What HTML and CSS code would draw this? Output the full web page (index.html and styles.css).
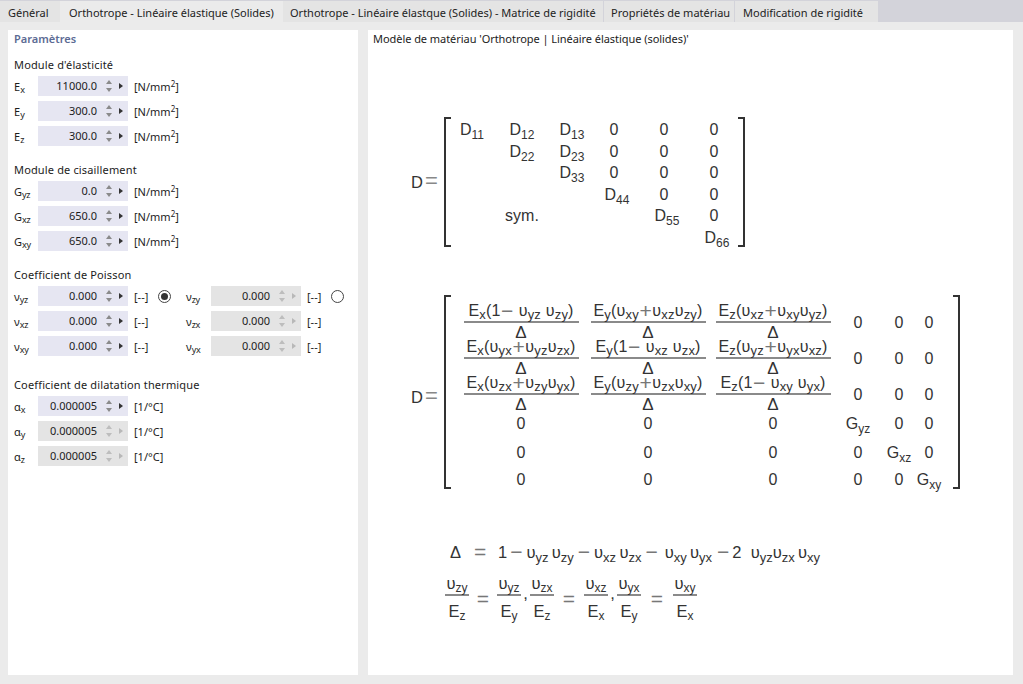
FILE: index.html
```html
<!DOCTYPE html>
<html lang="fr">
<head>
<meta charset="utf-8">
<title>Orthotrope - Linéaire élastique (Solides)</title>
<link rel="stylesheet" href="styles.css">
</head>
<body>
<nav class="tabs">
  <div class="tab t1">Général</div>
  <div class="tab t2 active">Orthotrope - Linéaire élastique (Solides)</div>
  <div class="tab t3">Orthotrope - Linéaire élastque (Solides) - Matrice de rigidité</div>
  <div class="tab t4">Propriétés de matériau</div>
  <div class="tab t5">Modification de rigidité</div>
</nav>
<main class="content">
  <section class="panel left">
    <h2 class="heading">Paramètres</h2>

    <div class="group g1">
      <h3>Module d'élasticité</h3>
      <div class="row"><span class="lab">E<sub>x</sub></span><span class="field"><span class="val">11000.0</span><i class="spin"></i><i class="next"></i></span><span class="unit">[N/mm<sup>2</sup>]</span></div>
      <div class="row"><span class="lab">E<sub>y</sub></span><span class="field"><span class="val">300.0</span><i class="spin"></i><i class="next"></i></span><span class="unit">[N/mm<sup>2</sup>]</span></div>
      <div class="row"><span class="lab">E<sub>z</sub></span><span class="field"><span class="val">300.0</span><i class="spin"></i><i class="next"></i></span><span class="unit">[N/mm<sup>2</sup>]</span></div>
    </div>

    <div class="group">
      <h3>Module de cisaillement</h3>
      <div class="row"><span class="lab">G<sub>yz</sub></span><span class="field"><span class="val">0.0</span><i class="spin"></i><i class="next"></i></span><span class="unit">[N/mm<sup>2</sup>]</span></div>
      <div class="row"><span class="lab">G<sub>xz</sub></span><span class="field"><span class="val">650.0</span><i class="spin"></i><i class="next"></i></span><span class="unit">[N/mm<sup>2</sup>]</span></div>
      <div class="row"><span class="lab">G<sub>xy</sub></span><span class="field"><span class="val">650.0</span><i class="spin"></i><i class="next"></i></span><span class="unit">[N/mm<sup>2</sup>]</span></div>
    </div>

    <div class="group">
      <h3>Coefficient de Poisson</h3>
      <div class="row">
        <span class="lab">ν<sub>yz</sub></span><span class="field"><span class="val">0.000</span><i class="spin"></i><i class="next"></i></span><span class="unit short">[--]</span><span class="radio on"></span>
        <span class="lab second">ν<sub>zy</sub></span><span class="field off"><span class="val">0.000</span><i class="spin"></i><i class="next"></i></span><span class="unit short">[--]</span><span class="radio"></span>
      </div>
      <div class="row">
        <span class="lab">ν<sub>xz</sub></span><span class="field"><span class="val">0.000</span><i class="spin"></i><i class="next"></i></span><span class="unit short">[--]</span><span class="radio none"></span>
        <span class="lab second">ν<sub>zx</sub></span><span class="field off"><span class="val">0.000</span><i class="spin"></i><i class="next"></i></span><span class="unit short">[--]</span>
      </div>
      <div class="row">
        <span class="lab">ν<sub>xy</sub></span><span class="field"><span class="val">0.000</span><i class="spin"></i><i class="next"></i></span><span class="unit short">[--]</span><span class="radio none"></span>
        <span class="lab second">ν<sub>yx</sub></span><span class="field off"><span class="val">0.000</span><i class="spin"></i><i class="next"></i></span><span class="unit short">[--]</span>
      </div>
    </div>

    <div class="group g4">
      <h3>Coefficient de dilatation thermique</h3>
      <div class="row"><span class="lab">α<sub>x</sub></span><span class="field"><span class="val">0.000005</span><i class="spin"></i><i class="next"></i></span><span class="unit">[1/°C]</span></div>
      <div class="row"><span class="lab">α<sub>y</sub></span><span class="field off"><span class="val">0.000005</span><i class="spin"></i><i class="next"></i></span><span class="unit">[1/°C]</span></div>
      <div class="row"><span class="lab">α<sub>z</sub></span><span class="field off"><span class="val">0.000005</span><i class="spin"></i><i class="next"></i></span><span class="unit">[1/°C]</span></div>
    </div>
  </section>

  <section class="panel right">
    <p class="title">Modèle de matériau 'Orthotrope | Linéaire élastique (solides)'</p>

    <div class="eq eq1">
      <div class="lhs">D<span class="op">=</span></div>
      <div class="bracket"></div>
      <div class="m1">
        <span>D<sub>11</sub></span><span>D<sub>12</sub></span><span>D<sub>13</sub></span><span>0</span><span>0</span><span>0</span>
        <span></span><span>D<sub>22</sub></span><span>D<sub>23</sub></span><span>0</span><span>0</span><span>0</span>
        <span></span><span></span><span>D<sub>33</sub></span><span>0</span><span>0</span><span>0</span>
        <span></span><span></span><span></span><span class="shift">D<sub>44</sub></span><span>0</span><span>0</span>
        <span></span><span>sym.</span><span></span><span></span><span class="shift">D<sub>55</sub></span><span>0</span>
        <span></span><span></span><span></span><span></span><span></span><span class="shift">D<sub>66</sub></span>
      </div>
      <div class="bracket close"></div>
    </div>

    <div class="eq eq2">
      <div class="lhs low">D<span class="op">=</span></div>
      <div class="bracket"></div>
      <div class="m2">
        <span><span class="frac"><span class="num">E<sub>x</sub>(1<b>−</b>&nbsp;υ<sub>yz</sub>&nbsp;υ<sub>zy</sub>)</span><span class="den">Δ</span></span></span>
        <span><span class="frac"><span class="num">E<sub>y</sub>(υ<sub>xy</sub><b>+</b>υ<sub>xz</sub>υ<sub>zy</sub>)</span><span class="den">Δ</span></span></span>
        <span><span class="frac"><span class="num">E<sub>z</sub>(υ<sub>xz</sub><b>+</b>υ<sub>xy</sub>υ<sub>yz</sub>)</span><span class="den">Δ</span></span></span>
        <span>0</span><span>0</span><span>0</span>
        <span><span class="frac"><span class="num">E<sub>x</sub>(υ<sub>yx</sub><b>+</b>υ<sub>yz</sub>υ<sub>zx</sub>)</span><span class="den">Δ</span></span></span>
        <span><span class="frac"><span class="num">E<sub>y</sub>(1<b>−</b>&nbsp;υ<sub>xz</sub>&nbsp;υ<sub>zx</sub>)</span><span class="den">Δ</span></span></span>
        <span><span class="frac"><span class="num">E<sub>z</sub>(υ<sub>yz</sub><b>+</b>υ<sub>yx</sub>υ<sub>xz</sub>)</span><span class="den">Δ</span></span></span>
        <span>0</span><span>0</span><span>0</span>
        <span><span class="frac"><span class="num">E<sub>x</sub>(υ<sub>zx</sub><b>+</b>υ<sub>zy</sub>υ<sub>yx</sub>)</span><span class="den">Δ</span></span></span>
        <span><span class="frac"><span class="num">E<sub>y</sub>(υ<sub>zy</sub><b>+</b>υ<sub>zx</sub>υ<sub>xy</sub>)</span><span class="den">Δ</span></span></span>
        <span><span class="frac"><span class="num">E<sub>z</sub>(1<b>−</b>&nbsp;υ<sub>xy</sub>&nbsp;υ<sub>yx</sub>)</span><span class="den">Δ</span></span></span>
        <span>0</span><span>0</span><span>0</span>
        <span>0</span><span>0</span><span>0</span><span><span class="gv">G<sub>yz</sub></span></span><span>0</span><span>0</span>
        <span>0</span><span>0</span><span>0</span><span>0</span><span><span class="gv">G<sub>xz</sub></span></span><span>0</span>
        <span>0</span><span>0</span><span>0</span><span>0</span><span>0</span><span><span class="gv">G<sub>xy</sub></span></span>
      </div>
      <div class="bracket close"></div>
    </div>

    <div class="line1">
      <span class="delta">Δ</span><b class="eqs">=</b><span>1</span><b class="minus first">−</b><span>υ<sub>yz</sub>&thinsp;υ<sub>zy</sub></span><b class="minus">−</b><span>υ<sub>xz</sub>&thinsp;υ<sub>zx</sub></span><b class="minus third">−</b><span>υ<sub>xy</sub>&thinsp;υ<sub>yx</sub></span><b class="minus wide">−</b><span>2&nbsp;&nbsp;υ<sub>yz</sub>υ<sub>zx</sub>&thinsp;υ<sub>xy</sub></span>
    </div>

    <div class="line2">
      <span class="ratio"><span class="top">υ<sub>zy</sub></span><span class="bot">E<sub>z</sub></span></span>
      <b class="rel r1">=</b>
      <span class="ratio"><span class="top">υ<sub>yz</sub></span><span class="bot">E<sub>y</sub></span></span>
      <span class="comma">,</span>
      <span class="ratio"><span class="top">υ<sub>zx</sub></span><span class="bot">E<sub>z</sub></span></span>
      <b class="rel r2">=</b>
      <span class="ratio"><span class="top">υ<sub>xz</sub></span><span class="bot">E<sub>x</sub></span></span>
      <span class="comma">,</span>
      <span class="ratio"><span class="top">υ<sub>yx</sub></span><span class="bot">E<sub>y</sub></span></span>
      <b class="rel r3">=</b>
      <span class="ratio"><span class="top">υ<sub>xy</sub></span><span class="bot">E<sub>x</sub></span></span>
    </div>
  </section>
</main>
</body>
</html>
```
FILE: styles.css
```css
* { box-sizing: border-box; }
html, body { margin: 0; padding: 0; }
body {
  width: 1023px;
  height: 684px;
  overflow: hidden;
  background: #ebebeb;
  font-family: "Noto Sans", "Open Sans", sans-serif;
  font-size: 11px;
  color: #1c1c1c;
}

/* Tabs */
.tabs {
  display: flex;
  height: 22px;
  padding-top: 1px;
  background: #d3d3da;
}
.tab {
  height: 21px;
  line-height: 23px;
  background: #e4e4e4;
  margin-right: 1px;
  padding-left: 8px;
  white-space: nowrap;
  color: #222;
}
.t1 { width: 60px; margin-right: 0; }
.t2 { width: 223px; margin-right: 0; padding-left: 9px; }
.t3 { width: 320px; padding-left: 7px; }
.t4 { width: 130px; padding-left: 7px; }
.t5 { width: 143px; padding-left: 8px; }
.tab.active { background: #ebebeb; }

/* Panels */
.content {
  display: flex;
  gap: 10px;
  padding: 8px 10px 9px 8px;
  height: 662px;
}
.panel { background: #fff; height: 645px; }
.left { width: 350px; padding: 0 6px; }
.right { width: 645px; padding-left: 5px; }

.heading {
  margin: 0;
  height: 18px;
  line-height: 18px;
  font-size: 11px;
  font-weight: 600;
  color: #5c6b94;
}

/* Groups and rows */
.group { margin-bottom: 10px; }
.group.g1 { margin-top: 8px; }
.group.g4 { margin-top: 15px; }
.group h3 {
  margin: 0;
  height: 20px;
  line-height: 18px;
  font-size: 11px;
  font-weight: 400;
  letter-spacing: .15px;
}
.row {
  display: flex;
  align-items: center;
  height: 25px;
  padding-bottom: 5px;
}
.lab { width: 24px; white-space: nowrap; }
.lab sub { font-size: 9px; line-height: 0; vertical-align: -2px; letter-spacing: -.3px; }
.lab.second { width: 25px; margin-left: 15px; }
.field {
  position: relative;
  display: block;
  width: 90px;
  height: 20px;
  line-height: 20px;
  background: #e6e6f2;
}
.field.off { background: #e4e4e4; }
.val {
  position: absolute;
  right: 31px;
  top: 0;
}
.spin::before, .spin::after, .next::before {
  content: "";
  position: absolute;
  width: 0;
  height: 0;
  border-style: solid;
  border-color: transparent;
}
.spin::before {
  left: 68px; top: 4px;
  border-width: 0 3px 4px;
  border-bottom-color: #8a8a8a;
}
.spin::after {
  left: 68px; top: 12px;
  border-width: 4px 3px 0;
  border-top-color: #8a8a8a;
}
.next::before {
  left: 81px; top: 7px;
  border-width: 3px 0 3px 4px;
  border-left-color: #333;
}
.field.off .spin::before { border-bottom-color: #bdbdbd; }
.field.off .spin::after { border-top-color: #bdbdbd; }
.field.off .next::before { border-left-color: #b8b8b8; }
.unit { margin-left: 6px; white-space: nowrap; }
.unit sup { font-size: 8px; line-height: 0; vertical-align: 4px; }
.unit.short { width: 19px; }
.radio {
  width: 13px;
  height: 13px;
  margin-left: 5px;
  border: 1px solid #444;
  border-radius: 50%;
  background: #fff;
  position: relative;
}
.radio.none { visibility: hidden; }
.radio.on::after {
  content: "";
  position: absolute;
  left: 2px; top: 2px;
  width: 7px; height: 7px;
  border-radius: 50%;
  background: #333;
}

/* Formula panel */
.title { margin: 0; height: 18px; line-height: 18px; letter-spacing: -.05px; }
.eq, .line1, .line2 {
  font-family: "Liberation Sans", Arial, sans-serif;
  font-size: 16px;
  color: #333;
}
.eq sub, .line1 sub, .line2 sub {
  font-size: 12px;
  line-height: 0;
  vertical-align: -4px;
}
.eq { display: flex; align-items: stretch; margin-left: 38px; }
.eq1 { margin-top: 69px; height: 130px; }
.eq2 { margin-top: 48px; height: 194px; }
.lhs {
  width: 33px;
  align-self: center;
  white-space: nowrap;
  font-size: 16.5px;
}
.lhs.low { margin-top: 10px; }
.lhs .op { color: #888; margin-left: 2px; font-size: 22px; line-height: 0; }
.bracket {
  width: 7px;
  border: 2px solid #333;
  border-right: 0;
}
.bracket.close { border-right: 2px solid #333; border-left: 0; }

.m1 {
  display: grid;
  grid-template-columns: 42px 58px 42px 42px 58px 42px;
  grid-template-rows: repeat(6, 21.5px);
  width: 287px;
  padding-top: 2px;
}
.m2 {
  display: grid;
  grid-template-columns: 140px 114px 136px 34px 48px 12px;
  grid-template-rows: 36px 36px 36px 22px 36px 18px;
  width: 502px;
  padding-top: 10px;
}
.m1 > span, .m2 > span {
  display: flex;
  align-items: center;
  justify-content: center;
  white-space: nowrap;
}
.m1 > span { display: block; text-align: center; line-height: 22px; }
.m1 > span.shift { padding-left: 6px; }
.gv { flex: none; white-space: nowrap; }
.frac {
  display: flex;
  flex-direction: column;
  align-items: center;
  width: 115px;
  flex: none;
}
.num {
  display: block;
  width: 100%;
  height: 18px;
  line-height: 12px;
  text-align: center;
  border-bottom: 2px solid #8a8a8a;
  white-space: nowrap;
  letter-spacing: .2px;
}
.num sub { font-size: 13px; vertical-align: -3px; }
.den { height: 18px; line-height: 19px; font-size: 17px; }
.num b, .line1 b, .line2 b {
  font-weight: 400;
  color: #777;
  font-size: 21px;
  line-height: 0;
}
.num b { margin: 0 .5px; vertical-align: -1.5px; }

.line1 {
  display: flex;
  align-items: center;
  height: 22px;
  margin: 52px 0 0 77px;
  font-size: 16.5px;
  white-space: nowrap;
}
.line1 sub { font-size: 13px; }
.delta { width: 24px; }
.eqs { width: 24px; }
.line1 b.minus { margin: 0 4px; }
.line1 b.first { margin-left: 3px; }
.line1 b.third { margin-right: 7px; }
.line1 b.wide { margin: 0 3px 0 5px; }
.line2 {
  display: flex;
  align-items: center;
  margin: 14px 0 0 72px;
  font-size: 16.5px;
}
.line2 sub { font-size: 12px; vertical-align: -3px; }
.ratio {
  display: flex;
  flex-direction: column;
  align-items: center;
  white-space: nowrap;
  width: 24px;
  flex: none;
}
.top {
  display: block;
  width: 100%;
  height: 19px;
  line-height: 12px;
  text-align: center;
  border-bottom: 2px solid #8a8a8a;
}
.bot { display: block; height: 24px; line-height: 30px; }
.rel { text-align: center; flex: none; }
.r1 { width: 28px; }
.r2 { width: 30px; }
.r3 { width: 32px; }
.comma { width: 9px; flex: none; line-height: 16px; align-self: flex-start; margin-top: 8px; text-align: center; }
```
